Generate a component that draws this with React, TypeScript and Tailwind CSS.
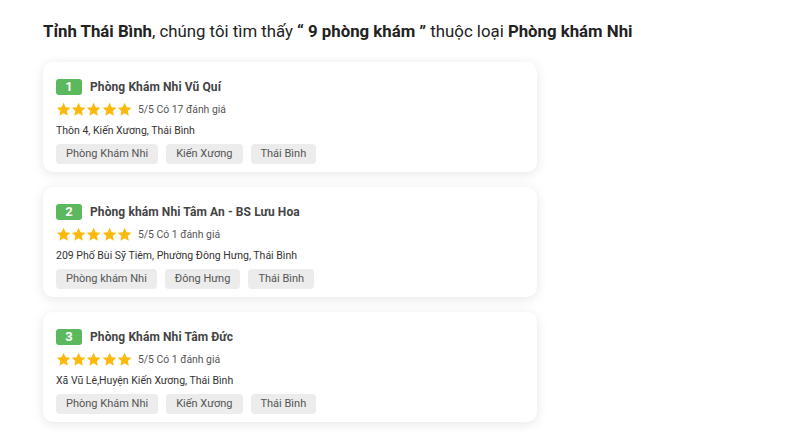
interface Clinic {
  name: string
  reviews: number
  address: string
  tags: string[]
}

const clinics: Clinic[] = [
  {
    name: 'Phòng Khám Nhi Vũ Quí',
    reviews: 17,
    address: 'Thôn 4, Kiến Xương, Thái Bình',
    tags: ['Phòng Khám Nhi', 'Kiến Xương', 'Thái Bình'],
  },
  {
    name: 'Phòng khám Nhi Tâm An - BS Lưu Hoa',
    reviews: 1,
    address: '209 Phố Bùi Sỹ Tiêm, Phường Đông Hưng, Thái Bình',
    tags: ['Phòng khám Nhi', 'Đông Hưng', 'Thái Bình'],
  },
  {
    name: 'Phòng Khám Nhi Tâm Đức',
    reviews: 1,
    address: 'Xã Vũ Lê,Huyện Kiến Xương, Thái Bình',
    tags: ['Phòng Khám Nhi', 'Kiến Xương', 'Thái Bình'],
  },
]

function StarIcon() {
  return (
    <svg viewBox="0 0 24 24" className="w-[15.2px] h-[15.2px] text-[#fbba0b]" fill="currentColor">
      <polygon points="12,1.2 15.2,8.2 22.8,9 17.1,14.2 18.7,21.8 12,17.9 5.3,21.8 6.9,14.2 1.2,9 8.8,8.2" />
    </svg>
  )
}

function ClinicCard({ clinic, index }: { clinic: Clinic; index: number }) {
  return (
    <div className="bg-white rounded-[10px] shadow-[0_2px_12px_rgba(0,0,0,0.1)] px-[13px] pt-[17px] pb-[8px]">
      {/* Title */}
      <div className="flex items-center gap-2 h-4">
        <span className="w-[26px] h-4 rounded-[3px] bg-[#5cb85c] text-white text-[13px] font-bold flex items-center justify-center">
          {index}
        </span>
        <span className="text-[12px] font-bold tracking-[0.1px] text-[#444]">{clinic.name}</span>
      </div>

      {/* Rating */}
      <div className="flex items-center mt-[7px] h-[16px]">
        <div className="flex">
          {[0, 1, 2, 3, 4].map((i) => (
            <StarIcon key={i} />
          ))}
        </div>
        <span className="ml-[6px] text-[10.4px] text-[#555]">5/5 Có {clinic.reviews} đánh giá</span>
      </div>

      {/* Address */}
      <div className="mt-[6px] text-[10.5px] text-[#333] leading-[14px]">{clinic.address}</div>

      {/* Tags */}
      <div className="flex gap-[8px] mt-[6px]">
        {clinic.tags.map((tag) => (
          <span key={tag} className="h-5 px-[10px] rounded-[4px] bg-[#ececec] text-[11px] text-[#555] flex items-center">
            {tag}
          </span>
        ))}
      </div>
    </div>
  )
}

export default function App() {
  return (
    <div className="w-[800px] h-[432px] bg-white overflow-hidden font-['Roboto',sans-serif]">
      <div className="pl-[43px] pt-[20px] w-[537px]">
        <h1 className="text-[16.8px] text-[#222] leading-[22px] whitespace-nowrap">
          <span className="font-bold">Tỉnh Thái Bình</span>, chúng tôi tìm thấy{' '}
          <span className="font-bold">“ 9 phòng khám ”</span> thuộc loại{' '}
          <span className="font-bold">Phòng khám Nhi</span>
        </h1>
        <div className="flex flex-col gap-[15px] mt-[20px]">
          {clinics.map((c, i) => (
            <ClinicCard key={i} clinic={c} index={i + 1} />
          ))}
        </div>
      </div>
    </div>
  )
}
